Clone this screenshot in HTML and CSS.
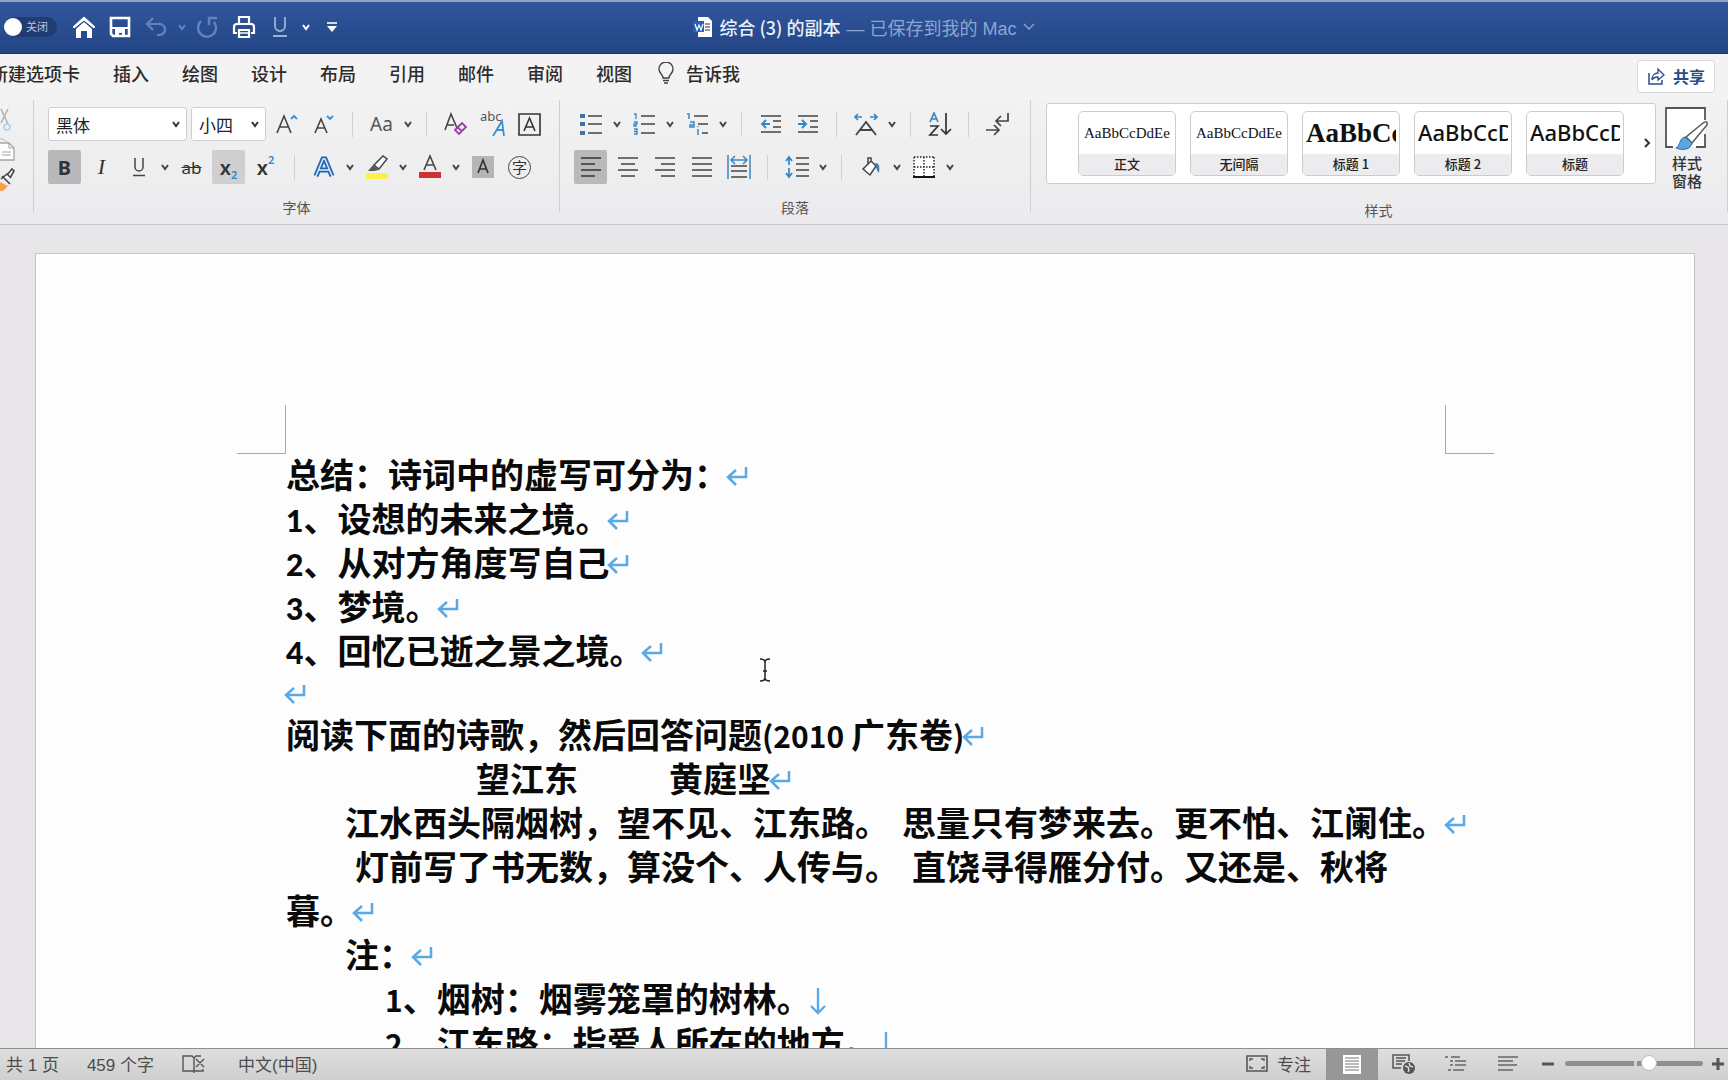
FILE: index.html
```html
<!DOCTYPE html>
<html lang="zh-CN">
<head>
<meta charset="utf-8">
<title>综合 (3) 的副本</title>
<link rel="stylesheet" href="styles.css">
</head>
<body>
<svg class="defs" aria-hidden="true">
  <symbol id="chev" viewBox="0 0 10 10"><path d="M2 3l3 4 3-4" fill="none" stroke="currentColor" stroke-width="2"/></symbol>
  <symbol id="ret" viewBox="0 0 22 22"><path d="M20 2v10H3M10 5l-8 7 8 8" fill="none" stroke="#5aa9e6" stroke-width="2.5"/></symbol>
  <symbol id="down" viewBox="0 0 18 28"><path d="M9 1v25M2 19l7 7 7-7" fill="none" stroke="#5aa9e6" stroke-width="2.3"/></symbol>
</svg>

<header class="titlebar">
  <div class="quick">
    <label class="autosave"><input type="checkbox" role="switch" aria-label="自动保存"><span>关闭</span></label>
    <button class="qbtn" aria-label="主页"><svg width="24" height="24" viewBox="0 0 24 24"><path d="M1 12L12 2l11 10-1 1L12 5 2 13z" fill="#fff" stroke="#fff"/><path d="M4 14l8-7 8 7v9h-5v-7H9v7H4z" fill="#fff"/></svg></button>
    <button class="qbtn" aria-label="保存"><svg width="22" height="22" viewBox="0 0 22 22"><path d="M2 2h18v18H4l-2-2z" fill="none" stroke="#fff" stroke-width="2.6"/><path d="M2 11h18v2H2zM6 13h10v8h-3v-4h-3v4H6z" fill="#fff"/></svg></button>
    <button class="qbtn dim" aria-label="撤销"><svg width="22" height="22" viewBox="0 0 22 22"><path d="M8 2L2 8l6 6M2 8h12a5 5 0 0 1 1 11h-3" fill="none" stroke="currentColor" stroke-width="2.2"/></svg></button>
    <button class="qchev dim" aria-label="撤销选项"><svg width="10" height="10"><use href="#chev"/></svg></button>
    <button class="qbtn dim" aria-label="重复"><svg width="22" height="22" viewBox="0 0 22 22"><path d="M4 5a9 9 0 1 0 13 1M12 9V2h8" fill="none" stroke="currentColor" stroke-width="2.4"/></svg></button>
    <button class="qbtn" aria-label="打印"><svg width="24" height="24" viewBox="0 0 24 24"><path d="M7 9V2h10v7M5 18H2v-6q0-3 3-3h14q3 0 3 3v6h-3M7 15h10v7H7z" fill="none" stroke="#fff" stroke-width="2.2"/><path d="M7 18h10" stroke="#fff" stroke-width="1.5"/></svg></button>
    <button class="qbtn soft" aria-label="下划线"><svg width="18" height="22" viewBox="0 0 18 22"><path d="M4 1v9a5 5 0 0 0 10 0V1M2 20h14" fill="none" stroke="currentColor" stroke-width="1.8"/></svg></button>
    <button class="qchev" aria-label="下划线选项"><svg width="10" height="10"><use href="#chev"/></svg></button>
    <button class="qbtn" aria-label="自定义工具栏"><svg width="12" height="12" viewBox="0 0 12 12"><path d="M1 2h10" stroke="#fff" stroke-width="1.6"/><path d="M1 5h10L6 11z" fill="#fff"/></svg></button>
  </div>
  <div class="doc-title">
    <svg width="20" height="20" viewBox="0 0 20 20"><path d="M5 0h10l4 4v16H5z" fill="#fff"/><path d="M12 7h5M12 10h5M12 13h5" stroke="#333" stroke-width="1"/><path d="M0 4h11v11H0z" fill="#2a5fb8"/><path d="M2 7l2 6 2-5 2 5 2-6" fill="none" stroke="#fff" stroke-width="1.2"/></svg>
    <strong>综合 (3) 的副本</strong>
    <span class="saved">— 已保存到我的 Mac</span>
    <svg class="saved" width="12" height="8" viewBox="0 0 12 8"><path d="M1 1l5 5 5-5" fill="none" stroke="currentColor" stroke-width="1.4"/></svg>
  </div>
</header>

<nav class="tabs">
  <a class="cut" href="#">新建选项卡</a><a href="#">插入</a><a href="#">绘图</a><a href="#">设计</a><a href="#">布局</a><a href="#">引用</a><a href="#">邮件</a><a href="#">审阅</a><a href="#">视图</a>
  <a class="tell" href="#"><svg width="16" height="22" viewBox="0 0 16 22"><path d="M5 16c0-4-4-4-4-9a7 7 0 0 1 14 0c0 5-4 5-4 9z" fill="none" stroke="#444" stroke-width="1.4"/><path d="M5 18.500h6M6 21h4" stroke="#444" stroke-width="1.4"/></svg>告诉我</a>
  <button class="share"><svg width="18" height="18" viewBox="0 0 18 18"><path d="M2 6v11h13v-4" fill="none" stroke="#2b4c86" stroke-width="1.5"/><path d="M5 13c0-5 3-7 6-7V2l6 6-6 5v-3c-3 0-5 1-6 3z" fill="none" stroke="#2b4c86" stroke-width="1.300"/></svg>共享</button>
</nav>

<section class="ribbon">
  <div class="group clip">
    <svg width="12" height="24" viewBox="0 0 12 24"><path d="M1 1l7 15M8 1L1 15" stroke="#b0b0b0" stroke-width="1.5"/><circle cx="7" cy="19" r="3" fill="none" stroke="#a9cfee" stroke-width="1.6"/></svg>
    <svg width="15" height="24" viewBox="0 0 15 24"><path d="M0 1h3l5 4" fill="none" stroke="#b5b5b5"/><path d="M0 5h9l5 5v12H0" fill="#fff" stroke="#a5a5a5" stroke-width="1.300"/><path d="M9 5v5h5M2 14h9M2 17h9" fill="none" stroke="#a5a5a5"/></svg>
    <svg width="15" height="24" viewBox="0 0 15 24"><path d="M0 14l8 4-5 5H0z" fill="#f3a24a"/><path d="M2 8l8 8M1 11l6-5 4 4M7 7l5-6 2 2-4 7" fill="#fff" stroke="#444" stroke-width="1.6"/></svg>
  </div>

  <div class="group font">
    <div class="row first">
      <label class="pick wide"><select aria-label="字体"><option>黑体</option></select><svg width="10" height="10"><use href="#chev"/></svg></label>
      <label class="pick"><select aria-label="字号"><option>小四</option></select><svg width="10" height="10"><use href="#chev"/></svg></label>
      <button class="btn" aria-label="增大字号"><svg width="22" height="22" viewBox="0 0 22 22"><path d="M1 20L8 3l7 17M4 14h8" fill="none" stroke="#444" stroke-width="1.6"/><path d="M15 6l3-3 3 3" fill="none" stroke="#3a8fd0" stroke-width="1.8"/></svg></button>
      <button class="btn" aria-label="减小字号"><svg width="20" height="22" viewBox="0 0 20 22"><path d="M1 20L7 6l6 14M3 15h8" fill="none" stroke="#444" stroke-width="1.6"/><path d="M13 3l3 3 3-3" fill="none" stroke="#3a8fd0" stroke-width="1.8"/></svg></button>
      <i class="sep"></i>
      <button class="btn aa">Aa</button><button class="chev" aria-label="更改大小写"><svg width="10" height="10"><use href="#chev"/></svg></button>
      <i class="sep"></i>
      <button class="btn" aria-label="清除格式"><svg width="24" height="24" viewBox="0 0 24 24"><path d="M1 18L7 2l6 14M3 13h7" fill="none" stroke="#444" stroke-width="1.6"/><path d="M11 18l7-7 4 4-7 7zM13 15l5 4" fill="#f4e8f8" stroke="#9a3fa8" stroke-width="1.8"/></svg></button>
      <button class="btn" aria-label="拼音指南"><svg width="26" height="26" viewBox="0 0 26 26"><text x="0" y="10" class="t-abc">abc</text><path d="M13 25L22 10l2 15M16 19h7" fill="none" stroke="#3a8fd0" stroke-width="1.8"/></svg></button>
      <button class="btn" aria-label="字符边框"><svg width="23" height="23" viewBox="0 0 23 23"><path d="M1 1h21v21H1z" fill="none" stroke="#333" stroke-width="1.6"/><path d="M6 18l5.500-13L17 18M8 14h7" fill="none" stroke="#333" stroke-width="1.6"/></svg></button>
    </div>
    <div class="row">
      <button class="btn on bold" aria-pressed="true">B</button>
      <button class="btn ital">I</button>
      <button class="btn" aria-label="下划线"><svg width="16" height="20" viewBox="0 0 16 20"><path d="M4 1v9a4 4 0 0 0 8 0V1M2 18.500h12" fill="none" stroke="#444" stroke-width="1.5"/></svg></button><button class="chev" aria-label="下划线样式"><svg width="10" height="10"><use href="#chev"/></svg></button>
      <button class="btn strike">ab</button>
      <button class="btn on light script" aria-pressed="true">x<sub>2</sub></button>
      <button class="btn script">x<sup>2</sup></button>
      <i class="sep"></i>
      <button class="btn" aria-label="文本效果"><svg width="22" height="22" viewBox="0 0 22 22"><path d="M3 20L10 3h2l7 17M6 14h10" fill="none" stroke="#2467ae" stroke-width="5"/><path d="M3 20L10 3h2l7 17M6 14h10" fill="none" stroke="#d5ecfb" stroke-width="1.500"/></svg></button><button class="chev" aria-label="文本效果选项"><svg width="10" height="10"><use href="#chev"/></svg></button>
      <button class="btn" aria-label="突出显示"><svg width="24" height="26" viewBox="0 0 24 26"><path d="M9 11l9-9 4 3-8 10z" fill="#fff" stroke="#444" stroke-width="1.5"/><path d="M8 11l6 5-5 1H3z" fill="#555"/><path d="M1 19h22v6H1z" fill="#fbf04b"/></svg></button><button class="chev" aria-label="突出显示颜色"><svg width="10" height="10"><use href="#chev"/></svg></button>
      <button class="btn" aria-label="字体颜色"><svg width="24" height="26" viewBox="0 0 24 26"><path d="M6 16L12 2l6 14M8 11h8" fill="none" stroke="#444" stroke-width="1.6"/><path d="M1 18h22v6H1z" fill="#cc3332"/></svg></button><button class="chev" aria-label="字体颜色选项"><svg width="10" height="10"><use href="#chev"/></svg></button>
      <button class="btn" aria-label="字符底纹"><svg width="22" height="22" viewBox="0 0 22 22"><path d="M0 0h22v22H0z" fill="#b5b5b5"/><path d="M6 17l5-13 5 13M8 13h6" fill="none" stroke="#333" stroke-width="1.7"/></svg></button>
      <button class="btn" aria-label="带圈字符"><span class="ring">字</span></button>
    </div>
    <div class="caption">字体</div>
  </div>

  <div class="group para">
    <div class="row first">
      <button class="btn" aria-label="项目符号"><svg width="24" height="24" viewBox="0 0 24 24"><path d="M1 2h5v4H1zM1 10h5v4H1zM1 19h5v4H1z" fill="#44729f"/><path d="M9 4h14M9 12h14M9 21h14" stroke="#444" stroke-width="1.6"/></svg></button><button class="chev" aria-label="项目符号库"><svg width="10" height="10"><use href="#chev"/></svg></button>
      <button class="btn" aria-label="编号"><svg width="24" height="24" viewBox="0 0 24 24"><path d="M2 2h2v5M2 10h3v2H2v2h3M2 17h3v5H2M2 19.500h3" fill="none" stroke="#3a86c2" stroke-width="1.300"/><path d="M9 4h14M9 12h14M9 21h14" stroke="#444" stroke-width="1.6"/></svg></button><button class="chev" aria-label="编号库"><svg width="10" height="10"><use href="#chev"/></svg></button>
      <button class="btn" aria-label="多级列表"><svg width="24" height="24" viewBox="0 0 24 24"><path d="M2 2h2v5M5 10h4v5H5v-2h4M13 17v6M13 14v1" fill="none" stroke="#3a86c2" stroke-width="1.500"/><path d="M9 4h14M13 12h10M17 21h6" stroke="#444" stroke-width="1.6"/></svg></button><button class="chev" aria-label="多级列表库"><svg width="10" height="10"><use href="#chev"/></svg></button>
      <i class="sep"></i>
      <button class="btn" aria-label="减少缩进"><svg width="22" height="22" viewBox="0 0 22 22"><path d="M1 3h20M13 8h8M13 14h8M1 19h20" stroke="#444" stroke-width="1.6"/><path d="M10 11H2M6 7l-4 4 4 4" fill="none" stroke="#2f86cc" stroke-width="1.9"/></svg></button>
      <button class="btn" aria-label="增加缩进"><svg width="22" height="22" viewBox="0 0 22 22"><path d="M1 3h20M13 8h8M13 14h8M1 19h20" stroke="#444" stroke-width="1.6"/><path d="M1 11h8M5 7l4 4-4 4" fill="none" stroke="#2f86cc" stroke-width="1.9"/></svg></button>
      <i class="sep"></i>
      <button class="btn" aria-label="中文版式"><svg width="26" height="24" viewBox="0 0 26 24"><path d="M3 23L13 10l10 13M7 18h12" fill="none" stroke="#444" stroke-width="1.8"/><path d="M9 5H2M5 2L2 5l3 3M17 5h7M21 2l3 3-3 3" fill="none" stroke="#3a86c2" stroke-width="1.7"/></svg></button><button class="chev" aria-label="中文版式选项"><svg width="10" height="10"><use href="#chev"/></svg></button>
      <i class="sep"></i>
      <button class="btn" aria-label="排序"><svg width="24" height="24" viewBox="0 0 24 24"><path d="M2 10l4-9 4 9M3 7h6" fill="none" stroke="#3a86c2" stroke-width="1.7"/><path d="M2 14h8l-8 9h8M18 1v21M13 17l5 5 5-5" fill="none" stroke="#333" stroke-width="1.7"/></svg></button>
      <i class="sep"></i>
      <button class="btn" aria-label="显示编辑标记"><svg width="25" height="24" viewBox="0 0 25 24"><path d="M23 1v8H11M16 4l-5 5 5 5M1 18h12M9 13l5 5-5 5" fill="none" stroke="#444" stroke-width="1.7"/></svg></button>
    </div>
    <div class="row">
      <button class="btn on" aria-label="左对齐" aria-pressed="true"><svg width="20" height="20" viewBox="0 0 20 20"><path d="M0 1h20M0 7h14M0 13h20M0 19h14" stroke="#333" stroke-width="1.6"/></svg></button>
      <button class="btn" aria-label="居中"><svg width="20" height="20" viewBox="0 0 20 20"><path d="M0 1h20M3 7h14M0 13h20M3 19h14" stroke="#444" stroke-width="1.6"/></svg></button>
      <button class="btn" aria-label="右对齐"><svg width="20" height="20" viewBox="0 0 20 20"><path d="M0 1h20M6 7h14M0 13h20M6 19h14" stroke="#444" stroke-width="1.6"/></svg></button>
      <button class="btn" aria-label="两端对齐"><svg width="20" height="20" viewBox="0 0 20 20"><path d="M0 1h20M0 7h20M0 13h20M0 19h20" stroke="#444" stroke-width="1.6"/></svg></button>
      <button class="btn" aria-label="分散对齐"><svg width="24" height="24" viewBox="0 0 24 24"><path d="M1 0v24M23 0v24M4 5h16M8 1L4 5l4 4M16 1l4 4-4 4" fill="none" stroke="#3a86c2" stroke-width="1.5"/><path d="M4 11h16M4 16h16M4 22h16" stroke="#444" stroke-width="1.6"/></svg></button>
      <i class="sep"></i>
      <button class="btn" aria-label="行距"><svg width="24" height="24" viewBox="0 0 24 24"><path d="M4 2v8M1 6l3-4 3 4M4 13v8M1 18l3 4 3-4" fill="none" stroke="#2f86cc" stroke-width="1.7"/><path d="M11 3h13M11 9h13M11 15h13M11 21h13" stroke="#444" stroke-width="1.6"/></svg></button><button class="chev" aria-label="行距选项"><svg width="10" height="10"><use href="#chev"/></svg></button>
      <i class="sep"></i>
      <button class="btn" aria-label="底纹"><svg width="20" height="20" viewBox="0 0 20 20"><path d="M2 12l8-8 5 5-6 9zM10 4V1H7v7" fill="#fff" stroke="#444" stroke-width="1.5"/><path d="M14 6c4 0 5 3 4 10-2-2-3-5-3-7z" fill="#3a7caf"/></svg></button><button class="chev" aria-label="底纹颜色"><svg width="10" height="10"><use href="#chev"/></svg></button>
      <button class="btn" aria-label="边框"><svg width="22" height="22" viewBox="0 0 22 22"><path d="M1 1h20v20H1z" fill="#fff"/><path d="M1 1h20M1 11h20M1 1v20M11 1v20M21 1v20" stroke="#222" stroke-width="1.4" stroke-dasharray="1.500 1.500"/><path d="M0 21h22" stroke="#111" stroke-width="2"/></svg></button><button class="chev" aria-label="边框选项"><svg width="10" height="10"><use href="#chev"/></svg></button>
    </div>
    <div class="caption">段落</div>
  </div>

  <div class="group styles">
    <div class="styles-main">
      <div class="gallery">
        <button class="card"><span class="sample serif">AaBbCcDdEe</span><span class="name">正文</span></button>
        <button class="card"><span class="sample serif">AaBbCcDdEe</span><span class="name">无间隔</span></button>
        <button class="card"><span class="sample h1">AaBbCc</span><span class="name">标题 1</span></button>
        <button class="card"><span class="sample h2">AaBbCcD</span><span class="name">标题 2</span></button>
        <button class="card"><span class="sample h2">AaBbCcD</span><span class="name">标题</span></button>
        <button class="more" aria-label="更多样式"><svg width="8" height="12" viewBox="0 0 8 12"><path d="M2 2l4 4-4 4" fill="none" stroke="#333" stroke-width="2"/></svg></button>
      </div>
      <button class="pane"><svg width="46" height="46" viewBox="0 0 46 46"><path d="M2 2h39v39H2z" fill="#fff"/><path d="M9 41H2V2h39v12M41 28v13h-9" fill="none" stroke="#555" stroke-width="1.8"/><path d="M22 31L39 17q5-3 4 2L28 37z" fill="#fff" stroke="#555" stroke-width="1.5"/><path d="M21 31c-6 1-4 8-9 11 8 3 15 1 16-5z" fill="#5aa7df" stroke="#2c6da8"/></svg><span>样式</span><span>窗格</span></button>
    </div>
    <div class="caption">样式</div>
  </div>
</section>

<main class="canvas">
  <article class="page">
    <i class="mark-l"></i><i class="mark-r"></i>
    <p>总结：诗词中的虚写可分为：<svg class="ret"><use href="#ret"/></svg></p>
    <p><span class="n">1</span>、设想的未来之境。<svg class="ret"><use href="#ret"/></svg></p>
    <p><span class="n">2</span>、从对方角度写自己<svg class="ret"><use href="#ret"/></svg></p>
    <p><span class="n">3</span>、梦境。<svg class="ret"><use href="#ret"/></svg></p>
    <p><span class="n">4</span>、回忆已逝之景之境。<svg class="ret"><use href="#ret"/></svg></p>
    <p class="blank"><svg class="ret"><use href="#ret"/></svg></p>
    <p>阅读下面的诗歌，然后回答问题<span class="m">(2010 </span>广东卷<span class="m">)</span><svg class="ret"><use href="#ret"/></svg></p>
    <p class="in-title"><span class="poem">望江东</span>黄庭坚<svg class="ret"><use href="#ret"/></svg></p>
    <p class="in-note one-line"><span class="half">江水西头隔烟树，望不见、江东路。</span>思量只有梦来去。更不怕、江阑住。<svg class="ret"><use href="#ret"/></svg></p>
    <p class="in-verse"><span class="half">灯前写了书无数，算没个、人传与。</span>直饶寻得雁分付。又还是、秋将暮。<svg class="ret"><use href="#ret"/></svg></p>
    <p class="in-note">注：<svg class="ret"><use href="#ret"/></svg></p>
    <p class="in-list"><span class="m">1</span>、烟树：烟雾笼罩的树林。<svg class="down"><use href="#down"/></svg></p>
    <p class="in-list"><span class="m">2</span>、江东路：指爱人所在的地方。<svg class="down"><use href="#down"/></svg></p>
    <svg class="ibeam" width="12" height="24" viewBox="0 0 12 24"><path d="M1 1q5 0 5 3v16q0 3-5 3M11 1q-5 0-5 3v16q0 3 5 3M4 13h4" fill="none" stroke="#222" stroke-width="1.5"/></svg>
  </article>
</main>

<footer class="status">
  <span class="pages">共 1 页</span>
  <span class="words">459 个字</span>
  <svg class="proof" width="24" height="20" viewBox="0 0 24 20"><path d="M12 17H1V2h9l2 2 2-2h5M12 4v15M12 17h9v-2M14 5l8 8M22 5l-8 8" fill="none" stroke="#555" stroke-width="1.4"/></svg>
  <span>中文(中国)</span>
  <button class="focus"><svg width="22" height="17" viewBox="0 0 22 17"><path d="M1 1h20v15H1z" fill="none" stroke="#555" stroke-width="1.6"/><path d="M4 6V4h3M15 4h3v2M18 11v2h-3M7 13H4v-2" fill="none" stroke="#555" stroke-width="1.4"/></svg>专注</button>
  <button class="view on" aria-label="页面视图"><svg width="20" height="19" viewBox="0 0 20 19"><path d="M1 0h18v19H1z" fill="#fff"/><path d="M3 3h14M3 6h14M3 9h14M3 12h14M3 15h14" stroke="#777" stroke-width="1.2"/></svg></button>
  <button class="view" aria-label="Web 版式"><svg width="24" height="20" viewBox="0 0 24 20"><path d="M9 14H1V1h16v6" fill="none" stroke="#555" stroke-width="1.5"/><path d="M4 4h10M4 7h9M4 10h6" stroke="#555" stroke-width="1.4"/><circle cx="17" cy="14" r="6" fill="#555"/><path d="M13 12l3 1 1 3-1 2M17 9l1 3 3 1" fill="none" stroke="#ddd" stroke-width="1.5"/></svg></button>
  <button class="view" aria-label="大纲"><svg width="22" height="17" viewBox="0 0 22 17"><path d="M0 2h3M6 2h9M5 6h3M10 6h11M5 10h3M10 10h11M3 15h3M8 15h11" stroke="#666" stroke-width="1.7"/></svg></button>
  <button class="view" aria-label="草稿"><svg width="20" height="17" viewBox="0 0 20 17"><path d="M0 2h20M0 6h15M0 10h19M0 15h15" stroke="#666" stroke-width="1.7"/></svg></button>
  <button class="zoom-btn" aria-label="缩小"><svg width="12" height="12" viewBox="0 0 12 12"><path d="M0 6h12" stroke="#555" stroke-width="3"/></svg></button>
  <input class="zoom" type="range" min="0" max="100" value="62" aria-label="缩放">
  <button class="zoom-btn" aria-label="放大"><svg width="12" height="12" viewBox="0 0 12 12"><path d="M0 6h12M6 0v12" stroke="#555" stroke-width="3"/></svg></button>
</footer>
</body>
</html>
```
FILE: styles.css
```css
* { box-sizing: border-box; }
body {
  margin: 0;
  height: 100vh;
  display: flex;
  flex-direction: column;
  overflow: hidden;
  font-family: "Liberation Sans", "Noto Sans CJK SC", sans-serif;
  color: #333;
  background: #e8e6e8;
}
button, select {
  font: inherit;
  color: inherit;
  border: 0;
  padding: 0;
  background: none;
}
a { color: inherit; text-decoration: none; }
svg { flex: none; }
.defs { position: absolute; width: 0; height: 0; }

/* title bar */
.titlebar {
  flex: none;
  height: 54px;
  display: grid;
  grid-template-columns: 1fr auto 1fr;
  align-items: center;
  padding-bottom: 2px;
  background: linear-gradient(#31569c, #224585);
  border-top: 2px solid #8da3c8;
  border-bottom: 1px solid #1c3768;
}
.quick { display: flex; align-items: center; padding-left: 4px; color: #fff; }
.autosave { display: grid; width: 53px; margin-right: 9px; align-items: center; }
.autosave > * { grid-area: 1 / 1; }
.autosave input {
  appearance: none;
  margin: 0;
  width: 53px;
  height: 20px;
  border-radius: 10px;
  background: #203c70;
}
.autosave input::before {
  content: "";
  display: block;
  width: 18px;
  height: 18px;
  margin: 1px 0;
  border-radius: 50%;
  background: #fff;
}
.autosave span { padding-left: 22px; font-size: 11px; line-height: 20px; color: #b9c6e0; }
.qbtn, .qchev, .btn, .chev { display: flex; align-items: center; justify-content: center; flex: none; }
.qbtn { width: 36px; height: 32px; }
.qchev { width: 16px; height: 32px; }
.dim { color: #6483ba; }
.soft { color: #9db2d8; }
.doc-title { display: flex; align-items: center; gap: 6px; font-size: 18px; color: #e9effa; white-space: nowrap; }
.doc-title strong { font-weight: 500; font-family: "Noto Sans CJK SC", sans-serif; }
.saved { color: #8ea5cf; }

/* tabs */
.tabs {
  flex: none;
  height: 46px;
  display: flex;
  align-items: center;
  gap: 33px;
  padding: 0 13px 8px 0;
  background: #f4f3f3;
  font-family: "Noto Sans CJK SC", sans-serif;
  font-size: 18px;
  font-weight: 500;
  color: #2c2c2c;
  white-space: nowrap;
}
.cut { margin-left: -10px; }
.tell { display: flex; align-items: center; gap: 12px; margin-left: -7px; }
.share {
  display: flex;
  align-items: center;
  justify-content: center;
  gap: 8px;
  width: 78px;
  height: 33px;
  margin: 6px 0 0 auto;
  border: 1px solid #d9d9d9;
  border-radius: 4px;
  background: #fff;
  font-size: 16px;
  font-weight: 700;
  color: #2b4c86;
}

/* ribbon */
.ribbon {
  flex: none;
  height: 125px;
  display: flex;
  background: linear-gradient(#f3f2f2, #ebeaed);
  border-bottom: 1px solid #c6c5c8;
}
.group {
  flex: none;
  display: flex;
  flex-direction: column;
  padding: 7px 0 0 12px;
  border-right: 1px solid #cfced1;
  margin-bottom: 12px;
}
.clip { width: 34px; padding: 8px 0 0; gap: 6px; }
.font { width: 526px; }
.para { width: 471px; }
.styles { flex: 1; padding: 3px 0 0 15px; }
.row { display: flex; align-items: center; height: 36px; margin-top: 9px; }
.row.first { margin-top: 0; }
.btn { width: 37px; height: 34px; font-size: 20px; }
.btn.on { background: #b9b9bb; border-radius: 3px; background-clip: padding-box; border: 0 solid transparent; border-width: 0 2px; }
.btn.light { background-color: #cfcfd2; }
.chev { width: 16px; height: 34px; color: #444; }
.sep { flex: none; width: 1px; height: 25px; margin: 0 10px; background: #d0cfd2; }
.pick {
  display: grid;
  align-items: center;
  width: 75px;
  height: 34px;
  margin-right: 2px;
  background: #fff;
  border: 1px solid #cfcfcf;
  border-radius: 3px;
}
.pick.wide { width: 139px; margin: 0 4px 0 2px; }
.pick > * { grid-area: 1 / 1; }
.pick svg { justify-self: end; margin-right: 5px; }
.pick select { appearance: none; width: 100%; padding-left: 7px; font-size: 17px; color: #222; font-family: "Noto Sans CJK SC", sans-serif; }
.aa { font-family: "Noto Sans", sans-serif; font-size: 19px; color: #555; }
.t-abc { font: 13px "Noto Sans", sans-serif; fill: #555; }
.bold { font-family: "Noto Sans", sans-serif; font-weight: 700; }
.ital { font-family: "Liberation Serif", serif; font-style: italic; font-size: 22px; }
.strike { font-family: "Noto Sans", sans-serif; font-size: 17px; text-decoration: line-through; }
.script { font-family: "Noto Sans", sans-serif; font-size: 20px; font-weight: 600; }
.script sub, .script sup { font-size: 11px; color: #2f86cc; line-height: 1; }
.script sub { align-self: flex-end; padding-bottom: 4px; }
.script sup { align-self: flex-start; padding-top: 4px; }
.ring {
  width: 23px;
  height: 23px;
  border: 1px solid #444;
  border-radius: 50%;
  font-size: 15px;
  line-height: 21px;
  text-align: center;
}
.caption { margin-top: 14px; padding-right: 12px; font-size: 14px; line-height: 20px; text-align: center; color: #555; }

.styles-main { display: flex; gap: 8px; }
.gallery {
  flex: 1;
  display: flex;
  align-items: center;
  gap: 14px;
  height: 81px;
  padding: 0 0 0 31px;
  background: #fff;
  border: 1px solid #cdccce;
  border-radius: 3px;
}
.card {
  flex: 0 1 98px;
  min-width: 0;
  height: 65px;
  display: flex;
  flex-direction: column;
  overflow: hidden;
  border: 1px solid #ccc;
  border-radius: 5px;
  background: #fff;
}
.sample { flex: 1; width: 90px; margin-left: 3px; overflow: hidden; white-space: nowrap; text-align: left; color: #111; }
.serif { padding-left: 2px; font: 15px/42px "Liberation Serif", serif; }
.h1 { font: 700 27px/42px "Liberation Serif", serif; }
.h2 { font: 500 22px/40px "Noto Sans", sans-serif; }
.name { width: 100%; height: 21px; background: #ecebee; font: 500 13px/20px "Noto Sans CJK SC", sans-serif; color: #222; }
.more { margin-left: auto; width: 17px; height: 60px; }
.pane { width: 46px; height: 80px; margin: 3px 17px 0 0; display: flex; flex-direction: column; align-items: center; font: 500 15px/18px "Noto Sans CJK SC", sans-serif; }
.pane svg { margin-bottom: 2px; }
.styles .caption { margin-top: 15px; padding-right: 16px; }

/* document */
.canvas { flex: 1; min-height: 0; overflow: hidden; padding: 28px 33px 0 35px; background: #e8e6e8; }
.page {
  position: relative;
  min-height: 1200px;
  padding: 198px 249px 0 250px;
  background: #fdfdfd;
  border: 1px solid #c4c3c5;
  font-family: "Noto Sans CJK SC", sans-serif;
  font-size: 34px;
  font-weight: 700;
  line-height: 44px;
  color: #0a0a0a;
  text-autospace: no-autospace;
}
.page p { margin: 0; }
.page .blank { line-height: 40px; height: 40px; }
.page .one-line { white-space: nowrap; }
.in-title { padding-left: 190px; }
.in-note { padding-left: 59px; }
.in-verse { text-indent: 69px; }
.in-list { padding-left: 99px; }
.poem { margin-right: 91px; }
.half { margin-right: 13px; }
.n, .m { font-size: 30px; line-height: 1; }
.n { font-family: Lato, sans-serif; font-weight: 900; }
.ret { width: 22px; height: 22px; margin-left: -2px; vertical-align: 1px; }
.down { width: 18px; height: 28px; margin-left: -2px; vertical-align: -3px; }
.mark-l, .mark-r { position: absolute; top: 151px; width: 49px; height: 49px; border-bottom: 1px solid #a9a9a9; }
.mark-l { left: 201px; border-right: 1px solid #a9a9a9; }
.mark-r { right: 200px; border-left: 1px solid #a9a9a9; }
.ibeam { position: absolute; left: 723px; top: 404px; }

/* status bar */
.status {
  flex: none;
  height: 32px;
  display: flex;
  align-items: center;
  padding: 0 4px 2px 6px;
  border-top: 1px solid #8e8e8e;
  background: linear-gradient(#dedede, #cfcfcf);
  font-size: 17px;
  color: #4c4c4c;
  white-space: nowrap;
}
.words { margin-left: 28px; }
.proof { margin: 0 32px 0 28px; }
.focus { display: flex; align-items: center; gap: 9px; margin: 0 15px 0 auto; }
.view { width: 52px; height: 31px; display: flex; align-items: center; justify-content: center; }
.view.on { background: #979797; margin-bottom: -2px; }
.zoom-btn { width: 12px; height: 31px; display: flex; align-items: center; margin-left: 8px; }
.zoom { appearance: none; width: 138px; height: 16px; margin: 0 1px 0 11px; background: none; }
.zoom::-webkit-slider-runnable-track { height: 5px; border-radius: 3px; background: linear-gradient(90deg, #8f8f8f 50%, #d0d0d0 50%, #d0d0d0 52%, #8f8f8f 52%); }
.zoom::-webkit-slider-thumb { appearance: none; width: 16px; height: 16px; margin-top: -6px; border-radius: 50%; background: #fff; border: 1px solid #bbb; }
```
